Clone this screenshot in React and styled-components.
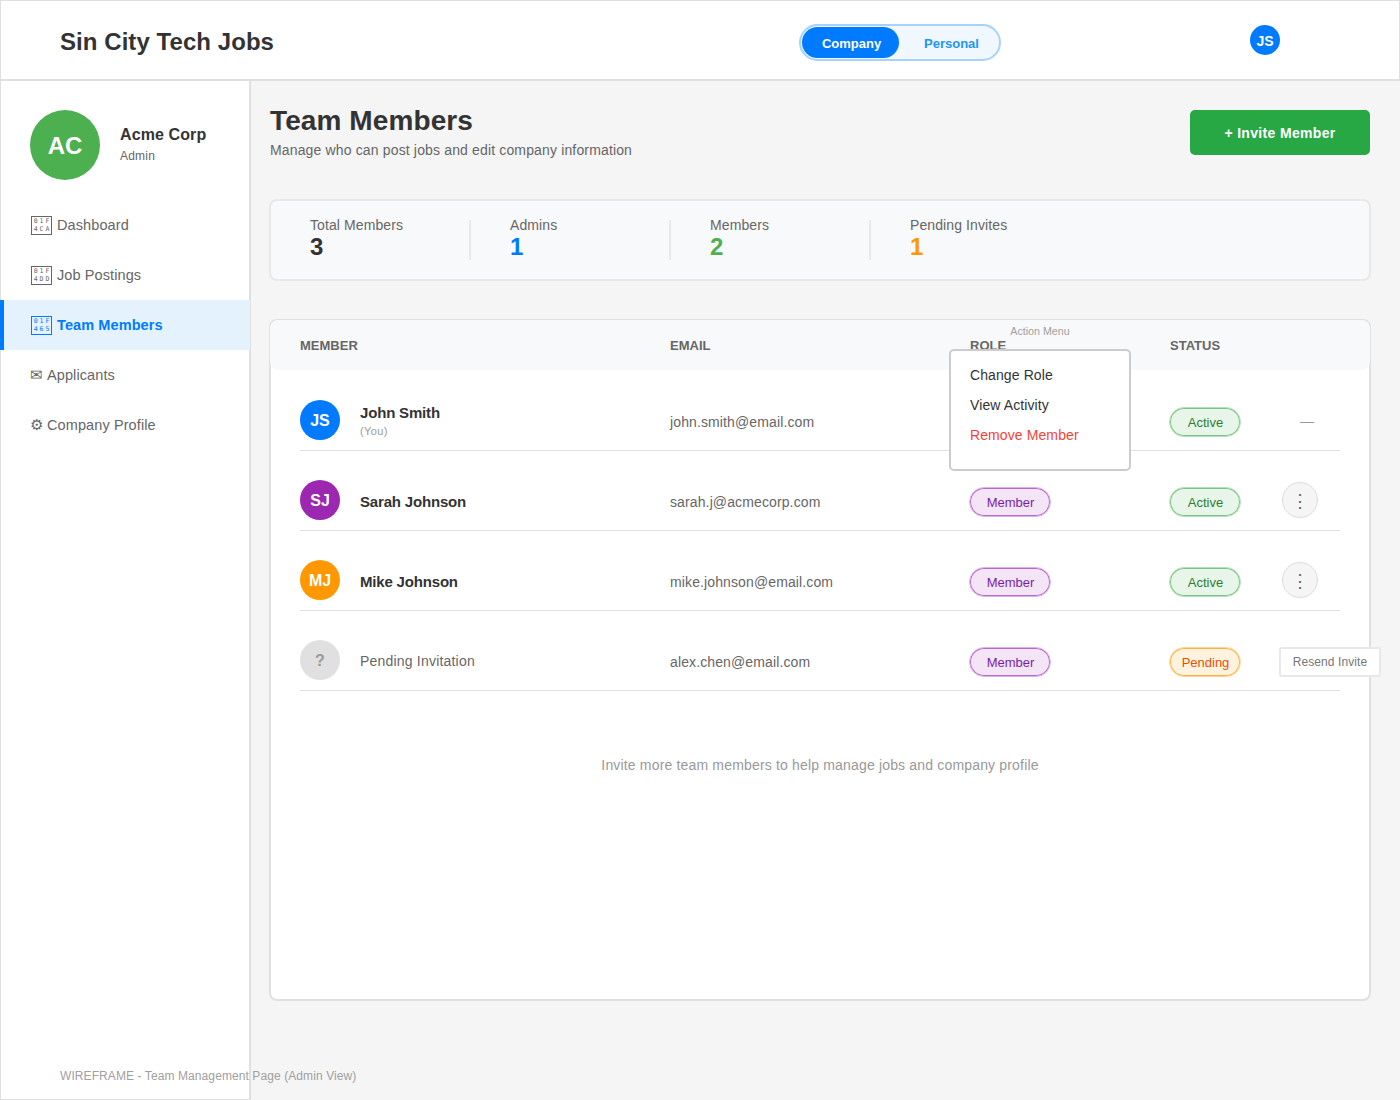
import React from 'react';
import styled, { createGlobalStyle } from 'styled-components';

const GlobalStyle = createGlobalStyle`
	html, body {
		margin: 0;
		padding: 0;
		background: #f5f5f5;
	}
	* {
		box-sizing: border-box;
	}
	body {
		font-family: "Liberation Sans", Arial, sans-serif;
	}
`;

const Page = styled.div`
	position: relative;
	width: 1400px;
	height: 1100px;
	display: flex;
	flex-direction: column;
	overflow: hidden;
`;

const Header = styled.header`
	height: 81px;
	flex: none;
	display: grid;
	grid-template-columns: 739px 202px 249px 30px;
	align-items: start;
	padding-left: 59px;
	background: #fff;
	border: 1px solid #e0e0e0;
	border-bottom-width: 2px;
`;

const Logo = styled.div`
	font-size: 24px;
	font-weight: 700;
	letter-spacing: 0.06px;
	color: #333;
	line-height: 28px;
	margin-top: 27px;
`;

const Toggle = styled.div`
	margin-top: 23px;
	width: 202px;
	height: 37px;
	padding: 1px;
	display: flex;
	background: #f0f7ff;
	border: 2px solid #a6d3fc;
	border-radius: 18.5px;
`;

const ToggleOption = styled.div`
	width: ${props => (props.$active ? '98px' : '100px')};
	display: flex;
	align-items: center;
	justify-content: center;
	border-radius: 15.5px;
	font-size: 13px;
	font-weight: 700;
	padding: ${props => (props.$active ? '1px 0 0 2px' : '1px 0 0 6px')};
	color: ${props => (props.$active ? '#fff' : '#2196f3')};
	background: ${props => (props.$active ? '#007bff' : 'transparent')};
`;

const Avatar = styled.div`
	flex: none;
	width: ${props => props.$size}px;
	height: ${props => props.$size}px;
	padding-top: 1px;
	border-radius: 50%;
	display: flex;
	align-items: center;
	justify-content: center;
	color: ${props => props.$color || '#fff'};
	background: ${props => props.$bg};
	font-size: ${props => props.$font}px;
	font-weight: 700;
`;

const HeaderAvatar = styled(Avatar)`
	margin-top: 24px;
`;

const Body = styled.div`
	flex: 1;
	display: flex;
	min-height: 0;
`;

const Sidebar = styled.aside`
	width: 251px;
	flex: none;
	background: #fff;
	border-left: 1px solid #e0e0e0;
	border-right: 2px solid #e0e0e0;
	border-bottom: 1px solid #e0e0e0;
`;

const Company = styled.div`
	display: flex;
	align-items: center;
	gap: 20px;
	height: 119px;
	padding: 29px 0 20px 29px;
`;

const CompanyInfo = styled.div`
	margin-top: -2px;
`;

const CompanyName = styled.div`
	font-size: 16px;
	font-weight: 700;
	letter-spacing: 0.1px;
	color: #333;
	line-height: 18px;
`;

const CompanyRole = styled.div`
	font-size: 12px;
	letter-spacing: 0.2px;
	color: #666;
	line-height: 13px;
	margin-top: 6px;
`;

const Nav = styled.nav`
	display: flex;
	flex-direction: column;
	margin: 0 -1px;
`;

const NavItem = styled.div`
	height: 50px;
	display: flex;
	align-items: center;
	padding-left: ${props => (props.$active ? '26px' : '30px')};
	font-size: 14.5px;
	letter-spacing: 0.1px;
	line-height: 16px;
	font-weight: ${props => (props.$active ? 700 : 400)};
	color: ${props => (props.$active ? '#007bff' : '#666')};
	background: ${props => (props.$active ? '#e3f2fd' : 'transparent')};
	border-left: ${props => (props.$active ? '4px solid #007bff' : 'none')};
`;

// the missing-glyph box the emoji fell back to in the reference
const GlyphBox = styled.span`
	flex: none;
	width: 21px;
	height: 19px;
	margin: 0 5px 0 1px;
	padding-left: 2px;
	display: flex;
	flex-direction: column;
	align-items: center;
	justify-content: center;
	border: 1px solid currentColor;
	font-family: "DejaVu Sans Mono", monospace;
	font-size: 6.5px;
	font-weight: 400;
	line-height: 8px;
	letter-spacing: 2px;
`;

const CharIcon = styled.span`
	flex: none;
	width: 17px;
`;

const Main = styled.main`
	flex: 1;
	padding: 29px 29px 0 18px;
	background: #f5f5f5;
`;

const TitleRow = styled.div`
	display: flex;
	justify-content: space-between;
	align-items: flex-start;
	height: 89px;
`;

const PageTitle = styled.h1`
	margin: -5px 0 0 1px;
	font-size: 28px;
	letter-spacing: 0.1px;
	line-height: 32px;
	font-weight: 700;
	color: #333;
`;

const PageSubtitle = styled.p`
	margin: 5px 0 0 1px;
	font-size: 14px;
	letter-spacing: 0.15px;
	line-height: 16px;
	color: #666;
`;

const InviteButton = styled.button`
	width: 180px;
	height: 45px;
	margin-right: 1px;
	border: none;
	border-radius: 5px;
	background: #28a745;
	color: #fff;
	font-family: inherit;
	font-size: 14px;
	letter-spacing: 0.33px;
	font-weight: 700;
`;

const Stats = styled.section`
	display: flex;
	height: 82px;
	padding-top: 19px;
	background: #f8f9fa;
	border: 2px solid #e8e8e8;
	border-radius: 8px;
`;

const Stat = styled.div`
	width: 200px;
	height: 40px;
	padding-left: 39px;
	border-right: 2px solid #e8e8e8;

	&:last-child {
		border-right: none;
	}
`;

const StatLabel = styled.div`
	font-size: 14px;
	letter-spacing: 0.1px;
	line-height: 16px;
	margin-top: -3px;
	color: #666;
`;

const StatValue = styled.div`
	font-size: 24px;
	line-height: 28px;
	font-weight: 700;
	color: ${props => props.$color};
`;

const TableCard = styled.section`
	position: relative;
	margin-top: 38px;
	height: 682px;
	background: #fff;
	border: 2px solid #e0e0e0;
	border-radius: 8px;
`;

const TableHead = styled.div`
	display: grid;
	grid-template-columns: 370px 300px 200px 1fr;
	align-items: center;
	height: 50px;
	margin: -1px -1px 0;
	padding-left: 30px;
	background: #f8f9fa;
	border-radius: 8px;
	font-size: 13px;
	font-weight: 700;
	color: #666;
`;

const Rows = styled.div`
	margin: 1px 29px 0;
`;

const Row = styled.div`
	display: grid;
	grid-template-columns: 370px 300px 200px 110px 60px;
	align-items: center;
	height: 80px;
	padding-top: 19px;
	border-bottom: 1px solid #e0e0e0;
`;

const MemberCell = styled.div`
	display: flex;
	align-items: center;
	gap: 20px;
`;

const MemberStack = styled.div`
	margin-top: -2px;
`;

const MemberName = styled.div`
	font-size: 15px;
	letter-spacing: -0.18px;
	font-weight: 700;
	line-height: 18px;
	color: #333;
	margin-top: 3px;
`;

const MemberNote = styled.div`
	font-size: 11px;
	letter-spacing: 0.4px;
	line-height: 13px;
	margin-top: 3px;
	color: #999;
`;

const PendingLabel = styled.div`
	font-size: 14px;
	letter-spacing: 0.2px;
	line-height: 16px;
	margin-top: 2px;
	color: #666;
`;

const Email = styled.div`
	font-size: 14px;
	letter-spacing: 0.12px;
	line-height: 16px;
	margin-top: 4px;
	color: #666;
`;

const Badge = styled.div`
	width: ${props => props.$width}px;
	height: 30px;
	margin: 4px 0 0 -1px;
	padding-left: 1px;
	display: flex;
	align-items: center;
	justify-content: center;
	border-radius: 15px;
	font-size: 13px;
	color: ${props => props.$color};
	background: ${props => props.$bg};
	border: 1px solid ${props => props.$halo};
	box-shadow: inset 0 0 0 1px ${props => props.$border};
`;

const Dash = styled.div`
	margin: 2px 0 0 20px;
	font-size: 14px;
	color: #999;
`;

const MoreButton = styled.div`
	width: 36px;
	height: 36px;
	margin-left: 2px;
	padding-top: 2px;
	display: flex;
	align-items: center;
	justify-content: center;
	border-radius: 50%;
	background: #f5f5f5;
	border: 1px solid #ddd;
	font-size: 18px;
	line-height: 18px;
	color: #666;
`;

const ResendButton = styled.div`
	width: 102px;
	height: 30px;
	margin: 4px 0 0 -1px;
	display: flex;
	align-items: center;
	justify-content: center;
	background: #fff;
	border: 2px solid #e8e8e8;
	border-radius: 3px;
	font-size: 12px;
	letter-spacing: 0.08px;
	color: #777;
`;

const Hint = styled.div`
	margin-top: 66px;
	text-align: center;
	font-size: 14px;
	letter-spacing: 0.17px;
	line-height: 16px;
	color: #999;
`;

const ActionMenu = styled.div`
	position: absolute;
	left: 678px;
	top: 4px;
	width: 182px;
`;

const ActionLabel = styled.div`
	text-align: center;
	font-size: 10.7px;
	line-height: 13px;
	color: #a0a0a0;
`;

const MenuBox = styled.div`
	height: 122px;
	margin-top: 11px;
	padding: 9px 0 0 19px;
	background: #fff;
	border: 2px solid #ccc;
	border-radius: 5px;
`;

const MenuItem = styled.div`
	font-size: 14px;
	letter-spacing: 0.1px;
	line-height: 30px;
	color: ${props => (props.$danger ? '#f44336' : '#333')};
`;

const Footnote = styled.div`
	position: absolute;
	left: 60px;
	top: 1069px;
	font-size: 12px;
	letter-spacing: 0.09px;
	line-height: 14px;
	color: #a0a0a0;
`;

const navItems = [
	{ glyph: ['01F', '4CA'], label: 'Dashboard' },
	{ glyph: ['01F', '4DD'], label: 'Job Postings' },
	{ glyph: ['01F', '465'], label: 'Team Members', active: true },
	{ char: '✉', label: 'Applicants' },
	{ char: '⚙', label: 'Company Profile' }
];

const stats = [
	{ label: 'Total Members', value: '3', color: '#333' },
	{ label: 'Admins', value: '1', color: '#007bff' },
	{ label: 'Members', value: '2', color: '#4caf50' },
	{ label: 'Pending Invites', value: '1', color: '#ff9800' }
];

const ActiveBadge = () => (
	<Badge $width={72} $color="#2e7d32" $bg="#e8f5e9" $border="#7cc481" $halo="#b5dfb8">Active</Badge>
);

const MemberBadge = () => (
	<Badge $width={82} $color="#7b1fa2" $bg="#f3e5f5" $border="#b869cc" $halo="#dcb3e6">Member</Badge>
);

const App = () => (
	<Page>
		<GlobalStyle />
		<Header>
			<Logo>Sin City Tech Jobs</Logo>
			<Toggle>
				<ToggleOption $active>Company</ToggleOption>
				<ToggleOption>Personal</ToggleOption>
			</Toggle>
			<div />
			<HeaderAvatar $size={30} $bg="#007bff" $font={14}>JS</HeaderAvatar>
		</Header>
		<Body>
			<Sidebar>
				<Company>
					<Avatar $size={70} $bg="#4caf50" $font={24}>AC</Avatar>
					<CompanyInfo>
						<CompanyName>Acme Corp</CompanyName>
						<CompanyRole>Admin</CompanyRole>
					</CompanyInfo>
				</Company>
				<Nav>
					{navItems.map(item => (
						<NavItem key={item.label} $active={item.active}>
							{item.glyph && (
								<GlyphBox>
									<span>{item.glyph[0]}</span>
									<span>{item.glyph[1]}</span>
								</GlyphBox>
							)}
							{item.char && <CharIcon>{item.char}</CharIcon>}
							{item.label}
						</NavItem>
					))}
				</Nav>
			</Sidebar>
			<Main>
				<TitleRow>
					<div>
						<PageTitle>Team Members</PageTitle>
						<PageSubtitle>Manage who can post jobs and edit company information</PageSubtitle>
					</div>
					<InviteButton>+ Invite Member</InviteButton>
				</TitleRow>
				<Stats>
					{stats.map(stat => (
						<Stat key={stat.label}>
							<StatLabel>{stat.label}</StatLabel>
							<StatValue $color={stat.color}>{stat.value}</StatValue>
						</Stat>
					))}
				</Stats>
				<TableCard>
					<TableHead>
						<div>MEMBER</div>
						<div>EMAIL</div>
						<div>ROLE</div>
						<div>STATUS</div>
					</TableHead>
					<Rows>
						<Row>
							<MemberCell>
								<Avatar $size={40} $bg="#007bff" $font={16}>JS</Avatar>
								<MemberStack>
									<MemberName>John Smith</MemberName>
									<MemberNote>(You)</MemberNote>
								</MemberStack>
							</MemberCell>
							<Email>john.smith@email.com</Email>
							<div />
							<ActiveBadge />
							<Dash>—</Dash>
						</Row>
						<Row>
							<MemberCell>
								<Avatar $size={40} $bg="#9c27b0" $font={16}>SJ</Avatar>
								<MemberName>Sarah Johnson</MemberName>
							</MemberCell>
							<Email>sarah.j@acmecorp.com</Email>
							<MemberBadge />
							<ActiveBadge />
							<MoreButton>⋮</MoreButton>
						</Row>
						<Row>
							<MemberCell>
								<Avatar $size={40} $bg="#ff9800" $font={16}>MJ</Avatar>
								<MemberName>Mike Johnson</MemberName>
							</MemberCell>
							<Email>mike.johnson@email.com</Email>
							<MemberBadge />
							<ActiveBadge />
							<MoreButton>⋮</MoreButton>
						</Row>
						<Row>
							<MemberCell>
								<Avatar $size={40} $bg="#e0e0e0" $color="#999" $font={16}>?</Avatar>
								<PendingLabel>Pending Invitation</PendingLabel>
							</MemberCell>
							<Email>alex.chen@email.com</Email>
							<MemberBadge />
							<Badge $width={72} $color="#e65100" $bg="#fff3e0" $border="#ffb13d" $halo="#ffd494">Pending</Badge>
							<ResendButton>Resend Invite</ResendButton>
						</Row>
					</Rows>
					<Hint>Invite more team members to help manage jobs and company profile</Hint>
					<ActionMenu>
						<ActionLabel>Action Menu</ActionLabel>
						<MenuBox>
							<MenuItem>Change Role</MenuItem>
							<MenuItem>View Activity</MenuItem>
							<MenuItem $danger>Remove Member</MenuItem>
						</MenuBox>
					</ActionMenu>
				</TableCard>
			</Main>
		</Body>
		<Footnote>WIREFRAME - Team Management Page (Admin View)</Footnote>
	</Page>
);

export default App;
